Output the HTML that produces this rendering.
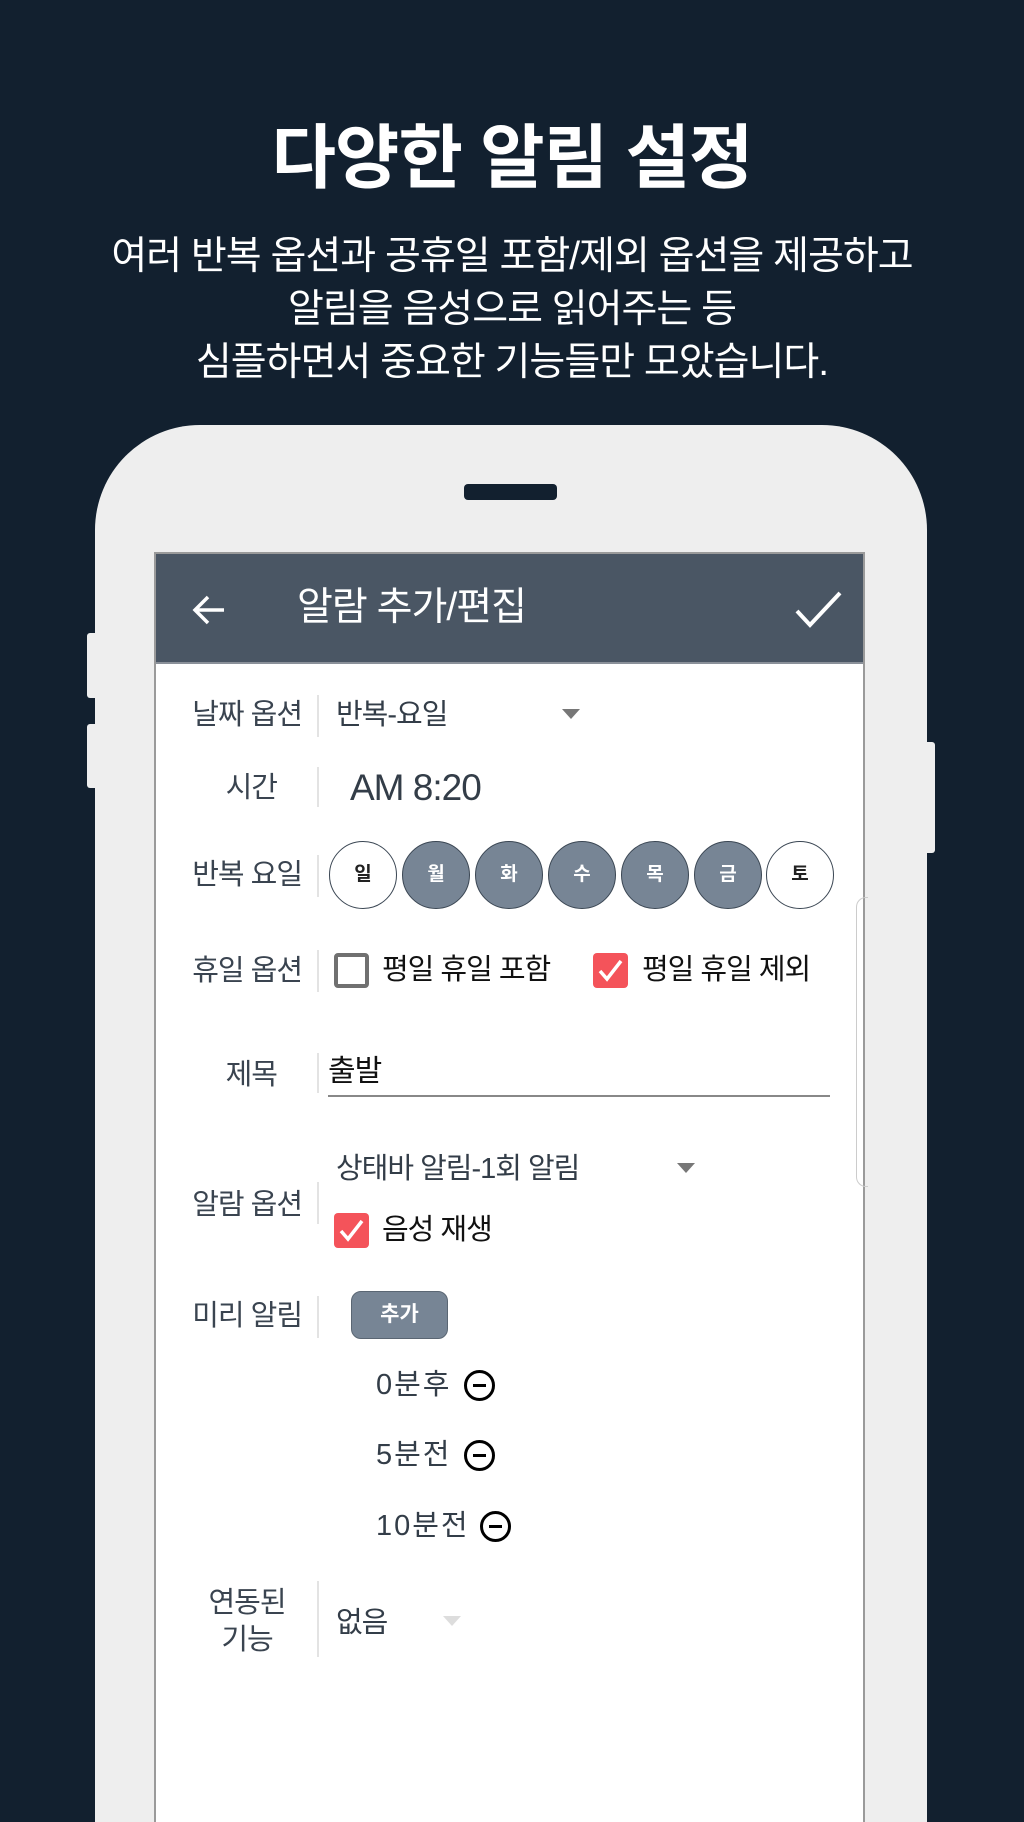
<!DOCTYPE html>
<html style="width:1024px;height:1822px;overflow:hidden"><head><meta charset="utf-8"><style>
*{margin:0;padding:0;box-sizing:border-box}
body{width:1024px;height:1822px;background:#12202f;position:relative;overflow:hidden;font-family:"Liberation Sans","Noto Sans CJK KR",sans-serif}
.abs{position:absolute}
.t1{left:0;width:1024px;top:116px;text-align:center;color:#fff;font-size:70px;font-weight:bold;line-height:84px;letter-spacing:-1px}
.t2{left:0;width:1024px;top:230px;text-align:center;color:#fff;font-size:39px;line-height:53px;letter-spacing:-1px}
.phone{left:95px;top:425px;width:832px;height:1397px;background:#eeeeee;border-radius:105px 105px 0 0}
.btn{background:#eeeeee;border-radius:3px}
.screen{left:154px;top:552px;width:711px;height:1270px;background:#fff;border:2px solid #9a9a9a;border-bottom:none}
.hdr{left:156px;top:554px;width:707px;height:110px;background:#4a5664;border-bottom:2px solid #8a9099}
.lbl{color:#3a4450;font-size:29px;text-align:right;width:150px;left:152px;line-height:32px;letter-spacing:-1px}
.sep{left:317px;width:2px;background:#e3e3e3;height:42px}
.val{color:#333d48;font-size:29px;line-height:32px;letter-spacing:-1px}
.tri{width:0;height:0;border-left:9px solid transparent;border-right:9px solid transparent;border-top:10px solid #777}
.day{width:68px;height:68px;border-radius:50%;border:1.5px solid #3a4653;background:#778595;color:#fff;font-size:19px;font-weight:bold;text-align:center;line-height:66px;top:841px}
.day.w{background:#fff;color:#222}
.cb{width:35px;height:35px;border-radius:4px}
.cbx{border:4px solid #707070;background:#fff}
.cbr{background:#f4535a}
.blk{color:#111;font-size:29px;line-height:32px;letter-spacing:-1px}
.min{width:31px;height:31px;border-radius:50%;border:3px solid #000}
.min:after{content:"";position:absolute;left:6px;top:11px;width:13px;height:3px;background:#000}
</style></head><body>
<div class="abs t1">다양한 알림 설정</div>
<div class="abs t2">여러 반복 옵션과 공휴일 포함/제외 옵션을 제공하고<br>알림을 음성으로 읽어주는 등<br>심플하면서 중요한 기능들만 모았습니다.</div>

<div class="abs btn" style="left:87px;top:633px;width:12px;height:65px"></div>
<div class="abs btn" style="left:87px;top:724px;width:12px;height:64px"></div>
<div class="abs btn" style="left:923px;top:742px;width:12px;height:111px"></div>
<div class="abs phone"></div>
<div class="abs" style="left:464px;top:484px;width:93px;height:16px;background:#12202f;border-radius:4px"></div>

<div class="abs screen"></div>
<div class="abs hdr"></div>
<svg class="abs" style="left:190px;top:592px" width="40" height="36" viewBox="0 0 40 36"><path d="M34 18H6M18 5L5 18l13 13" stroke="#fff" stroke-width="3.5" fill="none"/></svg>
<div class="abs" style="left:297px;top:586px;color:#fff;font-size:39px;line-height:44px;letter-spacing:-1px">알람 추가/편집</div>
<svg class="abs" style="left:794px;top:590px" width="50" height="40" viewBox="0 0 50 40"><path d="M3 21l13 14L46 3" stroke="#fff" stroke-width="4" fill="none"/></svg>

<div class="abs" style="left:856px;top:897px;width:12px;height:290px;border:1.5px solid #ccc;border-right:none;border-radius:10px 0 0 10px"></div>

<div class="abs lbl" style="top:699px">날짜 옵션</div>
<div class="abs sep" style="top:695px"></div>
<div class="abs val" style="left:336px;top:699px">반복-요일</div>
<div class="abs tri" style="left:562px;top:709px"></div>

<div class="abs lbl" style="top:772px;width:125px">시간</div>
<div class="abs sep" style="top:767px;height:40px"></div>
<div class="abs" style="left:350px;top:766px;color:#333d48;font-size:37px;line-height:44px;letter-spacing:-1px">AM 8:20</div>

<div class="abs lbl" style="top:859px">반복 요일</div>
<div class="abs sep" style="top:855px"></div>
<div class="abs day w" style="left:329px">일</div>
<div class="abs day" style="left:402px">월</div>
<div class="abs day" style="left:475px">화</div>
<div class="abs day" style="left:548px">수</div>
<div class="abs day" style="left:621px">목</div>
<div class="abs day" style="left:694px">금</div>
<div class="abs day w" style="left:766px">토</div>

<div class="abs lbl" style="top:955px">휴일 옵션</div>
<div class="abs sep" style="top:950px"></div>
<div class="abs cb cbx" style="left:334px;top:953px"></div>
<div class="abs blk" style="left:382px;top:954px">평일 휴일 포함</div>
<div class="abs cb cbr" style="left:593px;top:953px"><svg width="35" height="35" viewBox="0 0 35 35"><path d="M7 18l7 8L28 8" stroke="#fff" stroke-width="3.5" fill="none"/></svg></div>
<div class="abs blk" style="left:642px;top:954px">평일 휴일 제외</div>

<div class="abs lbl" style="top:1059px;width:125px">제목</div>
<div class="abs sep" style="top:1053px;height:40px"></div>
<div class="abs blk" style="left:328px;top:1056px;font-size:30px">출발</div>
<div class="abs" style="left:328px;top:1095px;width:502px;height:2px;background:#888"></div>

<div class="abs val" style="left:336px;top:1153px">상태바 알림-1회 알림</div>
<div class="abs tri" style="left:677px;top:1163px"></div>
<div class="abs lbl" style="top:1189px">알람 옵션</div>
<div class="abs sep" style="top:1182px"></div>
<div class="abs cb cbr" style="left:334px;top:1213px"><svg width="35" height="35" viewBox="0 0 35 35"><path d="M7 18l7 8L28 8" stroke="#fff" stroke-width="3.5" fill="none"/></svg></div>
<div class="abs blk" style="left:382px;top:1214px">음성 재생</div>

<div class="abs lbl" style="top:1300px">미리 알림</div>
<div class="abs sep" style="top:1296px"></div>
<div class="abs" style="left:351px;top:1291px;width:97px;height:48px;background:#778595;border:1.5px solid #5a6673;border-radius:10px;color:#fff;font-size:21px;font-weight:bold;text-align:center;line-height:45px">추가</div>

<div class="abs val" style="left:376px;top:1369px;letter-spacing:2px">0분후</div>
<div class="abs min" style="left:464px;top:1370px"></div>
<div class="abs val" style="left:376px;top:1439px;letter-spacing:2px">5분전</div>
<div class="abs min" style="left:464px;top:1440px"></div>
<div class="abs val" style="left:376px;top:1510px;letter-spacing:2px">10분전</div>
<div class="abs min" style="left:480px;top:1511px"></div>

<div class="abs" style="left:187px;width:120px;top:1585px;text-align:center;color:#3a4450;font-size:29px;line-height:37px;letter-spacing:-1px">연동된<br>기능</div>
<div class="abs sep" style="top:1581px;height:76px"></div>
<div class="abs val" style="left:336px;top:1607px">없음</div>
<div class="abs tri" style="left:443px;top:1616px;border-top-color:#ddd"></div>
</body></html>
